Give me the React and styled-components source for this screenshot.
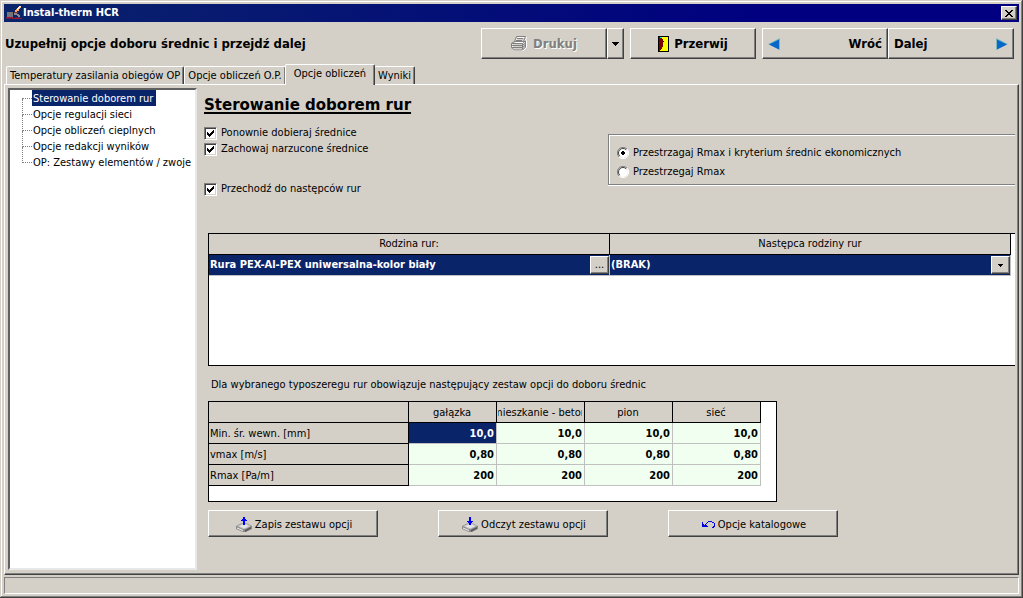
import { useState } from "react";
import styled, { createGlobalStyle, css } from "styled-components";

const GlobalStyle = createGlobalStyle`
  *, *::before, *::after {
    box-sizing: border-box;
  }

  body {
    margin: 0;
    background-color: #d4d0c8;
    color: #000000;
    font-family: "DejaVu Sans Condensed", "Noto Sans", sans-serif;
    font-size: 11px;
    line-height: 16px;
  }

  button, select, input {
    font: inherit;
    color: inherit;
    margin: 0;
    padding: 0;
    border-radius: 0;
  }
`;

const raised = css`
  border: 1px solid;
  border-color: #ffffff #404040 #404040 #ffffff;
  box-shadow: inset -1px -1px #808080;
`;

const Window = styled.div`
  display: flex;
  flex-direction: column;
  min-height: 100vh;
  padding: 4px;
  background-color: #d4d0c8;
  box-shadow: inset -1px -1px #404040, inset 1px 1px #d4d0c8,
    inset -2px -2px #808080, inset 2px 2px #ffffff;
`;

const TitleBar = styled.header`
  display: flex;
  align-items: center;
  gap: 1px;
  height: 18px;
  padding: 0 2px;
  background: linear-gradient(to right, #0a246a, #000080 75%);
  color: #ffffff;
  font-weight: bold;
`;

const Title = styled.span`
  flex: 1;
`;

const CloseButton = styled.button`
  ${raised}
  display: flex;
  align-items: center;
  justify-content: center;
  width: 16px;
  height: 14px;
  background-color: #d4d0c8;
`;

const Toolbar = styled.div`
  display: flex;
  padding: 6px 5px 5px 1px;
`;

const Prompt = styled.h1`
  flex: 1;
  margin: 0;
  font-size: 13px;
  line-height: 31px;
  white-space: nowrap;
`;

const ToolGroup = styled.div`
  display: flex;
  margin-left: 6px;
`;

const ToolButton = styled.button`
  ${raised}
  display: flex;
  align-items: center;
  justify-content: ${({ $justify }) => $justify || "center"};
  gap: 5px;
  width: ${({ $narrow }) => ($narrow ? "17px" : "126px")};
  height: 31px;
  padding: 1px ${({ $narrow }) => ($narrow ? "0" : "5px")} 0;
  background-color: #d4d0c8;
  font-size: 13px;
  font-weight: bold;

  &:disabled {
    color: #808080;
    text-shadow: 1px 1px #ffffff;
  }
`;

const TabBar = styled.div`
  display: flex;
  align-items: flex-end;
  height: 20px;
  padding-left: 2px;
`;

const Tab = styled.button`
  height: 18px;
  padding: 1px 3px 0;
  border: 1px solid;
  border-color: #ffffff #404040 transparent #ffffff;
  border-bottom: none;
  border-radius: 2px 2px 0 0;
  box-shadow: inset -1px 0 #808080;
  background-color: #d4d0c8;
  white-space: nowrap;

  ${({ $active }) =>
    $active &&
    css`
      position: relative;
      height: 21px;
      margin: 0 -1px -1px;
      padding: 0 8px 2px;
    `}
`;

const Panel = styled.main`
  ${raised}
  display: flex;
  flex: 1;
  padding: 3px 3px 4px;
`;

const Tree = styled.ul`
  width: 189px;
  margin: 0;
  padding: 0 0 0 12px;
  list-style: none;
  background-color: #ffffff;
  border: 2px solid;
  border-color: #606060 #e8e8e8 #e8e8e8 #606060;
`;

const TreeItem = styled.li`
  display: flex;
  height: 16px;

  &::before {
    content: "";
    width: 10px;
    height: 9px;
    border-bottom: 1px dotted #808080;
    border-left: 1px dotted #808080;
  }

  &:first-child::before {
    height: 1px;
    margin-top: 8px;
    border-left: none;
  }

  &:not(:first-child)::before {
    height: 16px;
    margin-top: -7px;
  }
`;

const TreeLink = styled.button`
  height: 16px;
  padding: 1px ${({ $selected }) => ($selected ? "3px" : "0")} 0 1px;
  border: none;
  background-color: ${({ $selected }) => ($selected ? "#0a246a" : "transparent")};
  color: ${({ $selected }) => ($selected ? "#ffffff" : "#000000")};
  white-space: nowrap;
`;

const Content = styled.section`
  flex: 1;
  min-width: 0;
  padding: 5px 0 0 11px;
`;

const Heading = styled.h2`
  margin: 0 0 8px -4px;
  font-family: "DejaVu Sans", sans-serif;
  font-size: 15px;
  line-height: 24px;
  text-decoration: underline;
  text-decoration-thickness: 2px;
  text-underline-offset: 2px;
`;

const Options = styled.div`
  display: flex;
  margin-bottom: 36px;
`;

const CheckList = styled.div`
  flex: 0 0 400px;
  margin-right: 4px;
  margin-left: -4px;
`;

const CheckLabel = styled.label`
  display: flex;
  align-items: center;
  gap: 4px;
  height: 16px;
  margin-top: ${({ $apart }) => ($apart ? "24px" : "0")};
`;

const CriterionBox = styled.fieldset`
  flex: 1;
  min-width: 0;
  height: 51px;
  margin: 9px 0 0;
  padding: 8px;
  border: 1px solid #808080;
  border-right: none;
  box-shadow: inset 1px 1px #ffffff, 0 1px #ffffff;
`;

const RadioLabel = styled.label`
  display: flex;
  align-items: center;
  gap: 4px;
  height: 19px;
`;

const Mark = styled.span`
  display: grid;

  > * {
    grid-area: 1 / 1;
  }

  > svg {
    pointer-events: none;
  }
`;

const CheckInput = styled.input`
  appearance: none;
  width: 13px;
  height: 13px;
  background-color: #ffffff;
  border: 1px solid;
  border-color: #808080 #ffffff #ffffff #808080;
  box-shadow: inset 1px 1px #404040, inset -1px -1px #d4d0c8;

  &:not(:checked) + svg {
    display: none;
  }
`;

const RadioInput = styled.input`
  appearance: none;
  width: 12px;
  height: 12px;

  &:not(:checked) + svg .dot {
    display: none;
  }
`;

const FamilyFrame = styled.div`
  min-height: 133px;
  background-color: #ffffff;
  border: 1px solid #000000;
  border-right: none;
`;

const FamilyTable = styled.table`
  width: calc(100% - 4px);
  table-layout: fixed;
  border-spacing: 0;

  th {
    height: 21px;
    padding: 0;
    background-color: #d4d0c8;
    border: solid #000000;
    border-width: 0 1px 1px 0;
    font-weight: normal;
    line-height: 18px;
  }

  td {
    height: 21px;
    padding: 0;
    background-color: #0a246a;
    border: solid #c0c0c0;
    border-width: 0 1px 1px 0;
    color: #ffffff;
    font-weight: bold;
  }
`;

const CellRow = styled.div`
  display: flex;
  align-items: center;
  justify-content: space-between;
  height: 20px;
  padding-left: 1px;
`;

const CellButton = styled.button`
  ${raised}
  width: 19px;
  height: 18px;
  background-color: #d4d0c8;
  color: #000000;
  font-weight: normal;
`;

const SelectWrap = styled.div`
  display: grid;
  align-items: center;
  height: 20px;

  > * {
    grid-area: 1 / 1;
  }
`;

const SuccessorSelect = styled.select`
  appearance: none;
  width: 100%;
  height: 20px;
  padding: 0 20px 0 1px;
  background-color: #0a246a;
  border: none;
  color: #ffffff;
  font-weight: bold;
`;

const SelectArrow = styled.span`
  ${raised}
  display: flex;
  align-items: center;
  justify-content: center;
  justify-self: end;
  width: 19px;
  height: 18px;
  background-color: #d4d0c8;
  pointer-events: none;
`;

const Caption = styled.p`
  margin: 11px 3px 8px;
`;

const OptionFrame = styled.div`
  width: 569px;
  max-width: 100%;
  min-height: 101px;
  background-color: #ffffff;
  border: 1px solid #000000;
`;

const OptionTable = styled.table`
  width: 552px;
  table-layout: fixed;
  border-spacing: 0;

  th,
  td {
    height: 21px;
    padding: 2px 2px 0 1px;
    border: solid #000000;
    border-width: 0 1px 1px 0;
  }

  th {
    background-color: #d4d0c8;
    font-weight: normal;
  }

  th:first-child {
    width: 200px;
    text-align: left;
  }

  td {
    background-color: #f0fff0;
    border-color: #c0c0c0;
    font-weight: bold;
    text-align: right;
  }
`;

const ClippedName = styled.div`
  display: flex;
  justify-content: center;
  overflow: hidden;
  white-space: nowrap;
`;

const ValueCell = styled.td`
  ${({ $selected }) =>
    $selected &&
    css`
      && {
        background-color: #0a246a;
        color: #ffffff;
      }
    `}
`;

const Actions = styled.div`
  display: flex;
  flex-wrap: wrap;
  gap: 8px 60px;
  margin: 8px 0 24px;
`;

const ActionButton = styled.button`
  ${raised}
  display: flex;
  align-items: center;
  justify-content: center;
  gap: 3px;
  width: 170px;
  height: 27px;
  padding: 2px 0 0 2px;
  background-color: #d4d0c8;
`;

const StatusBar = styled.footer`
  height: 17px;
  margin-top: 2px;
  border: 1px solid;
  border-color: #808080 #ffffff #ffffff #808080;
`;

const AppIcon = () => (
  <svg width="16" height="14" viewBox="0 0 16 14" shapeRendering="crispEdges">
    <path d="M1 6h6v5H1z" fill="#74747c" />
    <path d="M0 11h7v1H0zM6 12h10v1H6z" fill="#a01830" />
    <path d="M0 12h6v1H0zM9 11h5v1H9z" fill="#582048" />
    <path d="M8 7h3v1h2v1h1v2h-2v-1h-1V9H8z" fill="#8c8890" />
    <path d="M9 5h2v1h1v1H8V6h1z" fill="#903830" />
    <path d="M10 3h1V2h1V1h1V0h2v2h-1v1h-1v2h-2v1H9V4h1z" fill="#f8a860" />
    <path d="M12 1h1V0h2v1h-1v1h-1v1h-1v1h-1V2h1z" fill="#fff0d0" />
  </svg>
);

const CloseIcon = () => (
  <svg width="8" height="7" viewBox="0 0 8 7" shapeRendering="crispEdges">
    <path
      d="M0 0h2v1h1v1h2V1h1V0h2v1H7v1H6v1H5v1h1v1h1v1h1v1H6V6H5V5H3v1H2v1H0V6h1V5h1V4h1V3H2V2H1V1H0z"
      fill="#000000"
    />
  </svg>
);

const PrinterIcon = () => (
  <svg width="17" height="16" viewBox="0 0 17 16" fill="none">
    <g stroke="#ffffff" transform="translate(1 1)">
      <path d="M5.5.5h9l-2 5h-9zM1.5 6.5h10l3-3v7l-3 3h-10l-1-1v-5z" />
    </g>
    <g stroke="#808080">
      <path d="M5.5.5h9l-2 5h-9zM6 2.5h6M5 4.5h6" />
      <path d="M3.5 5.5l-3 2v4l2 2.500h9l3-3v-6l-2 1M.5 7.500h11l3-2.500M1 9.500h10.500l3-2.500M1 11.500h10.500l3-2.500M11.500 7.500v6" />
    </g>
  </svg>
);

const DoorIcon = () => (
  <svg width="11" height="16" viewBox="0 0 11 16" shapeRendering="crispEdges">
    <path d="M0 0h11v16H0z" fill="#000000" />
    <path d="M1 1h9v14H1z" fill="#ffff00" />
    <path d="M1 1h2v1h1v1h1v8H4v2H3v1H2v1H1z" fill="#800000" />
    <path d="M2 1h2v1H2z" fill="#00ffff" />
    <path d="M5 5h1v1H5z" fill="#000000" />
  </svg>
);

const ArrowIcon = ({ right }) => (
  <svg width="12" height="12" viewBox="0 0 12 12">
    <g transform={right ? "matrix(-1 0 0 1 12 0)" : undefined}>
      <path d="M0 6 12 0v12z" fill="#7cb8c0" />
      <path d="M1 6.500 11 1.500v10z" fill="#0868c8" />
    </g>
  </svg>
);

const DownIcon = ({ size }) => (
  <svg
    width={size === "small" ? 5 : 7}
    height={size === "small" ? 3 : 4}
    viewBox={size === "small" ? "0 0 5 3" : "0 0 7 4"}
    shapeRendering="crispEdges"
  >
    <path
      d={
        size === "small"
          ? "M0 0h5v1H4v1H3v1H2V2H1V1H0z"
          : "M0 0h7v1H6v1H5v1H4v1H3V3H2V2H1V1H0z"
      }
      fill="#000000"
    />
  </svg>
);

const CheckIcon = () => (
  <svg width="13" height="13" viewBox="0 0 13 13" shapeRendering="crispEdges">
    <path
      d="M3 5h1v1h1v1h1V6h1V5h1V4h1V3h1v3H9v1H8v1H7v1H6v1H5V9H4V8H3z"
      fill="#000000"
    />
  </svg>
);

const RadioIcon = () => (
  <svg width="12" height="12" viewBox="0 0 12 12">
    <circle cx="6" cy="6" r="5" fill="#ffffff" />
    <path d="M2 10A5.500 5.500 0 0 1 10 2" fill="none" stroke="#808080" />
    <path d="M2.800 9.200A4.500 4.500 0 0 1 9.200 2.800" fill="none" stroke="#404040" />
    <path d="M10 2A5.500 5.500 0 0 1 2 10" fill="none" stroke="#ffffff" />
    <path
      className="dot"
      d="M5 4h2v1h1v2H7v1H5V7H4V5h1z"
      fill="#000000"
      shapeRendering="crispEdges"
    />
  </svg>
);

const DriveIcon = ({ down }) => (
  <svg width="16" height="15" viewBox="0 0 16 15">
    <path d="M0 9 5 6.500h6L16 9v3l-6 3H7l-7-3z" fill="#8c8c8c" />
    <path d="M1 9 6 7h5l4 2-6 3H7z" fill="#c4c4c4" />
    <path d="M3 9 7 7.500h3L13 9l-4 2H7z" fill="#e4e4e4" />
    <path d="M1 10.500 7 13v1L1 11.500z" fill="#f4f4f4" />
    <path d="M9 13l6-3v1.500L9 15z" fill="#585858" />
    <path
      d={down ? "M7 0h2v4h2v1h-1v1H9v2H7V6H6V5H5V4h2z" : "M7 8V4H5V3h1V2h1V0h2v2h1v1h1v1H9v4z"}
      fill="#0000ff"
      shapeRendering="crispEdges"
    />
  </svg>
);

const UndoIcon = () => (
  <svg width="13" height="8" viewBox="0 0 13 8" shapeRendering="crispEdges">
    <path
      d="M0 1h1v2h1v1h1V3h1V2h1V1h1V0h4v1h2v1h1v4h-1v1h-2V6h1V5h1V2h-2V1H6v1H5v1H4v1h1v1h1v1H0z"
      fill="#0000e0"
    />
  </svg>
);

const tabs = [
  "Temperatury zasilania obiegów OP",
  "Opcje obliczeń O.P.",
  "Opcje obliczeń",
  "Wyniki",
];

const treeItems = [
  "Sterowanie doborem rur",
  "Opcje regulacji sieci",
  "Opcje obliczeń cieplnych",
  "Opcje redakcji wyników",
  "OP: Zestawy elementów / zwoje",
];

const columns = ["gałązka", "mieszkanie - beton", "pion", "sieć"];

const rows = [
  { name: "Min. śr. wewn. [mm]", values: ["10,0", "10,0", "10,0", "10,0"] },
  { name: "vmax [m/s]", values: ["0,80", "0,80", "0,80", "0,80"] },
  { name: "Rmax [Pa/m]", values: ["200", "200", "200", "200"] },
];

const Check = ({ label, apart }) => (
  <CheckLabel $apart={apart}>
    <Mark>
      <CheckInput type="checkbox" defaultChecked />
      <CheckIcon />
    </Mark>
    {label}
  </CheckLabel>
);

const Radio = ({ label, checked }) => (
  <RadioLabel>
    <Mark>
      <RadioInput type="radio" name="criterion" defaultChecked={checked} />
      <RadioIcon />
    </Mark>
    {label}
  </RadioLabel>
);

const App = () => {
  const [activeTab, setActiveTab] = useState(2);
  const [activeItem, setActiveItem] = useState(0);

  return (
    <Window>
      <GlobalStyle />
      <TitleBar>
        <AppIcon />
        <Title>Instal-therm HCR</Title>
        <CloseButton aria-label="Zamknij">
          <CloseIcon />
        </CloseButton>
      </TitleBar>

      <Toolbar>
        <Prompt>Uzupełnij opcje doboru średnic i przejdź dalej</Prompt>
        <ToolGroup>
          <ToolButton disabled>
            <PrinterIcon />
            Drukuj
          </ToolButton>
          <ToolButton $narrow aria-label="Opcje drukowania">
            <DownIcon />
          </ToolButton>
        </ToolGroup>
        <ToolGroup>
          <ToolButton>
            <DoorIcon />
            Przerwij
          </ToolButton>
        </ToolGroup>
        <ToolGroup>
          <ToolButton $justify="space-between">
            <ArrowIcon />
            Wróć
          </ToolButton>
          <ToolButton $justify="space-between">
            Dalej
            <ArrowIcon right />
          </ToolButton>
        </ToolGroup>
      </Toolbar>

      <TabBar role="tablist">
        {tabs.map((tab, index) => (
          <Tab
            key={tab}
            role="tab"
            aria-selected={index === activeTab}
            $active={index === activeTab}
            onClick={() => setActiveTab(index)}
          >
            {tab}
          </Tab>
        ))}
      </TabBar>

      <Panel>
        <Tree>
          {treeItems.map((item, index) => (
            <TreeItem key={item}>
              <TreeLink
                $selected={index === activeItem}
                onClick={() => setActiveItem(index)}
              >
                {item}
              </TreeLink>
            </TreeItem>
          ))}
        </Tree>

        <Content>
          <Heading>Sterowanie doborem rur</Heading>
          <Options>
            <CheckList>
              <Check label="Ponownie dobieraj średnice" />
              <Check label="Zachowaj narzucone średnice" />
              <Check label="Przechodź do następców rur" apart />
            </CheckList>
            <CriterionBox>
              <Radio
                label="Przestrzagaj Rmax i kryterium średnic ekonomicznych"
                checked
              />
              <Radio label="Przestrzegaj Rmax" />
            </CriterionBox>
          </Options>

          <FamilyFrame>
            <FamilyTable>
              <thead>
                <tr>
                  <th>Rodzina rur:</th>
                  <th>Następca rodziny rur</th>
                </tr>
              </thead>
              <tbody>
                <tr>
                  <td>
                    <CellRow>
                      Rura PEX-Al-PEX uniwersalna-kolor biały
                      <CellButton>...</CellButton>
                    </CellRow>
                  </td>
                  <td>
                    <SelectWrap>
                      <SuccessorSelect aria-label="Następca rodziny rur">
                        <option>(BRAK)</option>
                      </SuccessorSelect>
                      <SelectArrow>
                        <DownIcon size="small" />
                      </SelectArrow>
                    </SelectWrap>
                  </td>
                </tr>
              </tbody>
            </FamilyTable>
          </FamilyFrame>

          <Caption>
            Dla wybranego typoszeregu rur obowiązuje następujący zestaw opcji do
            doboru średnic
          </Caption>

          <OptionFrame>
            <OptionTable>
              <thead>
                <tr>
                  <th />
                  {columns.map((column) => (
                    <th key={column}>
                      <ClippedName>{column}</ClippedName>
                    </th>
                  ))}
                </tr>
              </thead>
              <tbody>
                {rows.map((row, rowIndex) => (
                  <tr key={row.name}>
                    <th>{row.name}</th>
                    {row.values.map((value, index) => (
                      <ValueCell
                        key={columns[index]}
                        $selected={rowIndex === 0 && index === 0}
                      >
                        {value}
                      </ValueCell>
                    ))}
                  </tr>
                ))}
              </tbody>
            </OptionTable>
          </OptionFrame>

          <Actions>
            <ActionButton>
              <DriveIcon />
              Zapis zestawu opcji
            </ActionButton>
            <ActionButton>
              <DriveIcon down />
              Odczyt zestawu opcji
            </ActionButton>
            <ActionButton>
              <UndoIcon />
              Opcje katalogowe
            </ActionButton>
          </Actions>
        </Content>
      </Panel>

      <StatusBar />
    </Window>
  );
};

export default App;
